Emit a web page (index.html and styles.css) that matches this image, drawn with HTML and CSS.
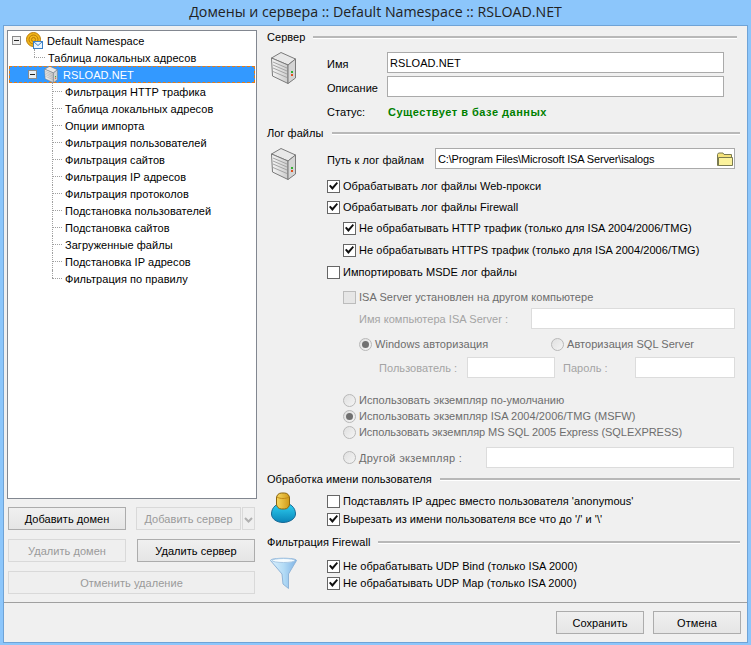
FILE: index.html
```html
<!DOCTYPE html>
<html>
<head>
  <title>Домены и сервера</title>
  <meta charset="UTF-8">
  <link rel="stylesheet" href="styles.css">
</head>
<body>
  <svg class="defs" width="0" height="0">
    <defs>
      <linearGradient id="srvFront" x1="0" y1="0" x2="1" y2="0">
        <stop offset="0" stop-color="#f6f6f6"/>
        <stop offset="1" stop-color="#cccccc"/>
      </linearGradient>
      <linearGradient id="gold" x1="0" y1="0" x2="1" y2="0">
        <stop offset="0" stop-color="#f8d860"/>
        <stop offset="1" stop-color="#d09a18"/>
      </linearGradient>
      <linearGradient id="bodyBlue" x1="0" y1="0" x2="0" y2="1">
        <stop offset="0" stop-color="#30d4f4"/>
        <stop offset="1" stop-color="#0a84b8"/>
      </linearGradient>
      <linearGradient id="funnelBlue" x1="0" y1="0" x2="1" y2="0">
        <stop offset="0" stop-color="#dcf0fd"/>
        <stop offset="0.5" stop-color="#b4dcf6"/>
        <stop offset="1" stop-color="#80b4e6"/>
      </linearGradient>
      <symbol id="server" viewBox="0 0 25 32">
        <path d="M0.5 6 L10 0.5 L24.5 7 L17 13 Z" fill="#e8e8e8" stroke="#7a7a7a"/>
        <path d="M0.5 6 L17 13 L17 31.5 L1.5 24 Z" fill="url(#srvFront)" stroke="#7a7a7a"/>
        <path d="M17 13 L24.5 7 L24.5 26 L17 31.5 Z" fill="#d4d4d4" stroke="#7a7a7a"/>
        <path d="M2 10 L16 16 M2 13 L16 19 M2 16 L16 22 M2 19.5 L16 25.5" stroke="#a4a4a4" fill="none"/>
        <rect x="20" y="19" width="2" height="2" fill="#30b030"/>
        <rect x="20" y="22" width="2" height="2" fill="#e05020"/>
      </symbol>
    </defs>
  </svg>

  <div class="window">
    <div class="titlebar">Домены и сервера :: Default Namespace :: RSLOAD.NET</div>
    <div class="client">
      <div class="main">
        <div class="left-pane">
          <div class="tree">
            <div class="tree-row root">
              <span class="toggle"></span>
              <svg class="ns-icon" width="17" height="17" viewBox="0 0 17 17">
                <circle cx="7.5" cy="7.5" r="7" fill="#f2b618" stroke="#b87a08"/>
                <circle cx="7.5" cy="7.5" r="4.5" fill="none" stroke="#b87a08"/>
                <circle cx="7.5" cy="7.5" r="2" fill="none" stroke="#b87a08"/>
                <rect x="7.5" y="9.5" width="9" height="7" fill="#eaf4fc" stroke="#3a80c8"/>
                <path d="M7.5 9.5 L12 13.5 L16.5 9.5" fill="none" stroke="#3a80c8"/>
              </svg>
              <span>Default Namespace</span>
            </div>
            <div class="tree-row ns-leaf"><span>Таблица локальных адресов</span></div>
            <div class="tree-row selected">
              <span class="toggle"></span>
              <svg class="tree-server" width="14" height="17"><use href="#server"/></svg>
              <span>RSLOAD.NET</span>
            </div>
            <div class="tree-row leaf"><span>Фильтрация HTTP трафика</span></div>
            <div class="tree-row leaf"><span>Таблица локальных адресов</span></div>
            <div class="tree-row leaf"><span>Опции импорта</span></div>
            <div class="tree-row leaf"><span>Фильтрация пользователей</span></div>
            <div class="tree-row leaf"><span>Фильтрация сайтов</span></div>
            <div class="tree-row leaf"><span>Фильтрация IP адресов</span></div>
            <div class="tree-row leaf"><span>Фильтрация протоколов</span></div>
            <div class="tree-row leaf"><span>Подстановка пользователей</span></div>
            <div class="tree-row leaf"><span>Подстановка сайтов</span></div>
            <div class="tree-row leaf"><span>Загруженные файлы</span></div>
            <div class="tree-row leaf"><span>Подстановка IP адресов</span></div>
            <div class="tree-row leaf last"><span>Фильтрация по правилу</span></div>
          </div>
          <div class="button-row">
            <button class="btn w118">Добавить домен</button>
            <button class="btn w105" disabled>Добавить сервер</button>
            <button class="btn split" disabled><svg width="9" height="6" viewBox="0 0 9 6"><path d="M1 1 L4.500 4.500 L8 1" fill="none" stroke="#b0b0b0" stroke-width="2"/></svg></button>
          </div>
          <div class="button-row">
            <button class="btn w118" disabled>Удалить домен</button>
            <button class="btn w118">Удалить сервер</button>
          </div>
          <div class="button-row">
            <button class="btn wide" disabled>Отменить удаление</button>
          </div>
        </div>

        <div class="right-pane">
          <div class="legend top"><span>Сервер</span></div>
          <div class="section server-section">
            <svg class="big-icon" width="25" height="32"><use href="#server"/></svg>
            <div class="fields">
              <div class="field"><label>Имя</label><div class="textbox name-box">RSLOAD.NET</div></div>
              <div class="field gap3"><label>Описание</label><div class="textbox name-box"></div></div>
              <div class="field gap3"><label>Статус:</label><span class="status">Существует в базе данных</span></div>
            </div>
          </div>

          <div class="legend log"><span>Лог файлы</span></div>
          <div class="section log-section">
            <svg class="big-icon" width="25" height="32"><use href="#server"/></svg>
            <div class="fields">
              <div class="field">
                <label class="path-label">Путь к лог файлам</label>
                <div class="textbox path-box">
                  <span class="path-text">C:\Program Files\Microsoft ISA Server\isalogs</span>
                  <svg width="16" height="14" viewBox="0 0 16 14">
                    <path d="M0.5 13.500 V2.500 L1.500 1 H6 L7 2.500 H14.500 V13.500 Z" fill="#f4e27a" stroke="#7a7a50"/>
                    <path d="M1.500 5.500 H15.500 V13.500 H1.500 Z" fill="#fbf29c" stroke="#7a7a50"/>
                  </svg>
                </div>
              </div>
            </div>
          </div>

          <div class="options">
            <div class="opt m9"><input type="checkbox" checked><span>Обрабатывать лог файлы Web-прокси</span></div>
            <div class="opt m5"><input type="checkbox" checked><span>Обрабатывать лог файлы Firewall</span></div>
            <div class="opt m5 indent1"><input type="checkbox" checked><span>Не обрабатывать HTTP трафик (только для ISA 2004/2006/TMG)</span></div>
            <div class="opt m6 indent1"><input type="checkbox" checked><span>Не обрабатывать HTTPS трафик (только для ISA 2004/2006/TMG)</span></div>
            <div class="opt m6"><input type="checkbox"><span>Импортировать MSDE лог файлы</span></div>

            <div class="opt m9 indent1 off"><input type="checkbox" disabled><span>ISA Server установлен на другом компьютере</span></div>
            <div class="opt-box m3 indent2 dim">
              <span class="computer-label">Имя компьютера ISA Server :</span>
              <div class="textbox off-box computer-box"></div>
            </div>
            <div class="opt m7 indent2 off">
              <input type="radio" disabled checked><span class="auth-win">Windows авторизация</span>
              <input type="radio" disabled><span>Авторизация SQL Server</span>
            </div>
            <div class="opt-box m5 dim cred">
              <span class="user-label">Пользователь :</span>
              <div class="textbox off-box user-box"></div>
              <span class="pass-label">Пароль :</span>
              <div class="textbox off-box pass-box"></div>
            </div>
            <div class="opt m14 indent1 off"><input type="radio" disabled><span>Использовать экземпляр по-умолчанию</span></div>
            <div class="opt indent1 off"><input type="radio" disabled checked><span>Использовать экземпляр ISA 2004/2006/TMG (MSFW)</span></div>
            <div class="opt indent1 off"><input type="radio" disabled><span class="tight">Использовать экземпляр MS SQL 2005 Express (SQLEXPRESS)</span></div>
            <div class="opt-box m7 indent1 off">
              <input type="radio" disabled><span class="other-label">Другой экземпляр :</span>
              <div class="textbox off-box other-box"></div>
            </div>
          </div>

          <div class="legend user"><span>Обработка имени пользователя</span></div>
          <div class="section check-section user-section">
            <svg class="big-icon" width="25" height="32" viewBox="0 0 25 32">
              <path d="M0.5 22 C0.500 15 6 11 12.500 11 C19 11 24.500 15 24.500 22 C24.500 27 18 30.500 12 30.500 C6 30.500 0.500 27 0.500 22 Z" fill="url(#bodyBlue)" stroke="#1a6a96"/>
              <rect x="5.500" y="1" width="13" height="16" rx="5" fill="url(#gold)" stroke="#8a6410"/>
              <path d="M6 5 C9 7 15 7 18 5" fill="none" stroke="#c08818"/>
            </svg>
            <div class="checks">
              <div class="opt"><input type="checkbox"><span>Подставлять IP адрес вместо пользователя 'anonymous'</span></div>
              <div class="opt m2"><input type="checkbox" checked><span>Вырезать из имени пользователя все что до '/' и '\'</span></div>
            </div>
          </div>

          <div class="legend firewall"><span>Фильтрация Firewall</span></div>
          <div class="section check-section firewall-section">
            <svg class="funnel" width="29" height="33" viewBox="0 0 29 33">
              <path d="M1.500 3.500 C1.500 0.500 27.500 0.500 27.500 3.500 L19.500 17 L19.500 31.500 L14 27 L13 17 Z" fill="url(#funnelBlue)" stroke="#8fb4d8"/>
              <ellipse cx="14.500" cy="3.500" rx="11.500" ry="2" fill="#f6fcff" stroke="#a8c8e4"/>
            </svg>
            <div class="checks">
              <div class="opt"><input type="checkbox" checked><span>Не обрабатывать UDP Bind (только ISA 2000)</span></div>
              <div class="opt m1"><input type="checkbox" checked><span>Не обрабатывать UDP Map (только ISA 2000)</span></div>
            </div>
          </div>
        </div>
      </div>

      <div class="footer">
        <button class="btn footer-btn">Сохранить</button>
        <button class="btn footer-btn">Отмена</button>
      </div>
    </div>
  </div>
</body>
</html>
```

FILE: styles.css
```css
* {
  box-sizing: border-box;
}
body {
  margin: 0;
  background-color: #8cc6fb;
  font-family: "Liberation Sans", Arial, sans-serif;
  font-size: 11px;
  letter-spacing: 0.05px;
  color: #000;
}
.defs {
  position: absolute;
}
.window {
  width: 751px;
  height: 645px;
  display: flex;
  flex-direction: column;
}
.titlebar {
  flex-shrink: 0;
  height: 25px;
  line-height: 23px;
  text-align: center;
  font-family: "Open Sans", sans-serif;
  font-size: 14.200px;
  letter-spacing: 0;
  color: #222;
}
.client {
  flex: 1;
  min-height: 0;
  margin: 0 3px 2px 3px;
  background-color: #f0f0f0;
  border: 1px solid #6fa3d6;
  display: flex;
  flex-direction: column;
}
.main {
  flex: 1;
  min-height: 0;
  display: flex;
}
.footer {
  height: 40px;
  border-top: 1px solid #a0a0a0;
  display: flex;
  justify-content: flex-end;
  gap: 9px;
  padding: 8px 6px 0 0;
}

/* left side */
.left-pane {
  width: 263px;
  padding: 4px 0 0 3px;
}
.tree {
  width: 250px;
  height: 469px;
  background-color: #fff;
  border: 1px solid #828790;
  padding: 1px;
}
.tree-row {
  position: relative;
  height: 17px;
  display: flex;
  align-items: center;
  white-space: nowrap;
}
.toggle {
  position: relative;
  width: 9px;
  height: 9px;
  border: 1px solid #8a8a8a;
  background-color: #f0f0f0;
}
.toggle:before {
  content: "";
  position: absolute;
  left: 1px;
  top: 3px;
  width: 5px;
  height: 1px;
  background-color: #222;
}
.root {
  padding-left: 3px;
}
.ns-icon {
  margin-left: 5px;
  margin-right: 4px;
}
.ns-leaf {
  padding-left: 39px;
}
.ns-leaf:before {
  content: "";
  position: absolute;
  left: 25px;
  top: 0;
  height: 8px;
  border-left: 1px dotted #a0a0a0;
}
.ns-leaf:after {
  content: "";
  position: absolute;
  left: 25px;
  top: 8px;
  width: 11px;
  border-top: 1px dotted #a0a0a0;
}
.selected {
  background-color: #3399ff;
  color: #fff;
  outline: 1px dashed #e87a10;
  outline-offset: -1px;
  padding-left: 19px;
}
.selected .toggle {
  background-color: #e8eef4;
}
.tree-server {
  margin-left: 7px;
  margin-right: 5px;
}
.leaf {
  padding-left: 56px;
}
.leaf:before {
  content: "";
  position: absolute;
  left: 43px;
  top: 0;
  height: 17px;
  border-left: 1px dotted #a0a0a0;
}
.leaf.last:before {
  height: 8px;
}
.leaf:after {
  content: "";
  position: absolute;
  left: 43px;
  top: 8px;
  width: 10px;
  border-top: 1px dotted #a0a0a0;
}
.button-row {
  display: flex;
  margin: 8px 0 0 1px;
  width: 247px;
  justify-content: space-between;
  height: 23px;
}
.button-row + .button-row {
  margin-top: 9px;
}
.btn {
  height: 23px;
  padding: 0;
  font-family: "Liberation Sans", Arial, sans-serif;
  font-size: 11px;
  letter-spacing: 0.05px;
  color: #000;
  border: 1px solid #acacac;
  background: linear-gradient(#f0f0f0, #e5e5e5);
}
.btn:disabled {
  color: #9a9a9a;
  border-color: #d9d9d9;
  background: #efefef;
}
.w118 {
  width: 118px;
}
.w105 {
  width: 105px;
  margin-left: 10px;
}
.split {
  width: 13px;
  margin-left: 1px;
}
.wide {
  width: 100%;
}
.footer-btn {
  width: 88px;
}

/* right side */
.right-pane {
  flex: 1;
}
.legend {
  height: 16px;
  width: 473px;
  display: flex;
  align-items: center;
  gap: 8px;
  white-space: nowrap;
}
.legend:after {
  content: "";
  flex: 1;
  height: 2px;
  background-color: #b8b8b8;
  border-bottom: 1px solid #fff;
}
.legend.top {
  margin-top: 3px;
  width: 470px;
}
.legend.log {
  margin-top: 4px;
}
.legend.user {
  margin-top: 3px;
}
.section {
  display: flex;
  padding-left: 4px;
}
.server-section {
  margin-top: 7px;
}
.log-section {
  margin-top: 7px;
  height: 21px;
}
.big-icon {
  flex-shrink: 0;
}
.fields {
  margin-left: 31px;
  flex: 1;
}
.field {
  display: flex;
  align-items: center;
  height: 21px;
}
.field label {
  width: 60px;
  padding-top: 2px;
}
.field .path-label {
  width: 108px;
}
.gap3 {
  margin-top: 3px;
}
.textbox {
  height: 21px;
  background-color: #fff;
  border: 1px solid #aaa;
  padding: 0 2px;
  line-height: 20px;
  white-space: nowrap;
}
.name-box {
  width: 337px;
}
.path-box {
  width: 300px;
  display: flex;
  justify-content: space-between;
  align-items: center;
  padding-right: 1px;
}
.path-text {
  letter-spacing: -0.15px;
}
.status {
  font-weight: bold;
  letter-spacing: 0.5px;
  color: #008000;
  padding: 2px 0 0 1px;
}
.options {
  padding-left: 60px;
}
.opt {
  height: 16px;
  display: flex;
  align-items: center;
  white-space: nowrap;
}
.opt input,
.opt-box input {
  appearance: none;
  margin: 0 3px 0 0;
  flex-shrink: 0;
  position: relative;
  width: 13px;
  height: 13px;
  background-color: #fff;
  border: 1px solid #666;
}
.opt input[type="checkbox"]:checked:before {
  content: "";
  position: absolute;
  left: 1px;
  top: 1px;
  width: 9px;
  height: 9px;
  background-color: #111;
  clip-path: polygon(0 50%, 15% 35%, 38% 58%, 85% 5%, 100% 20%, 38% 95%);
}
.opt input[type="checkbox"]:disabled {
  background-color: #e6e6e6;
  border-color: #bcbcbc;
}
.opt input[type="radio"],
.opt-box input[type="radio"] {
  border-radius: 50%;
  border-color: #b8b8b8;
  background: linear-gradient(135deg, #e0e0e0, #f4f4f4);
}
.opt input[type="radio"]:checked:before {
  content: "";
  position: absolute;
  left: 2px;
  top: 2px;
  width: 7px;
  height: 7px;
  border-radius: 50%;
  background-color: #707070;
}
.off {
  color: #6d6d6d;
}
.dim {
  color: #a4a4a4;
}
.tight {
  letter-spacing: -0.06px;
}
.opt-box {
  height: 21px;
  display: flex;
  align-items: center;
  white-space: nowrap;
}
.off-box {
  border-color: #dcdcdc;
}
.indent1 {
  margin-left: 16px;
}
.indent2 {
  margin-left: 32px;
}
.computer-label {
  width: 172px;
}
.computer-box {
  width: 204px;
}
.auth-win {
  width: 176px;
}
.cred {
  margin-left: 52px;
}
.user-label {
  width: 88px;
}
.user-box {
  width: 88px;
}
.pass-label {
  width: 72px;
  margin-left: 8px;
}
.pass-box {
  width: 100px;
}
.other-label {
  width: 127px;
  letter-spacing: 0.3px;
}
.other-box {
  width: 248px;
}
.check-section {
  display: flex;
}
.checks {
  margin-left: 31px;
  padding-top: 1px;
}
.user-section {
  margin-top: 5px;
  height: 42px;
}
.firewall-section {
  margin-top: 7px;
  padding-left: 2px;
}
.funnel {
  flex-shrink: 0;
}
.firewall-section .checks {
  margin-left: 29px;
}
.m1 { margin-top: 1px; }
.m2 { margin-top: 2px; }
.m3 { margin-top: 3px; }
.m5 { margin-top: 5px; }
.m6 { margin-top: 6px; }
.m7 { margin-top: 7px; }
.m9 { margin-top: 9px; }
.m14 { margin-top: 14px; }
```
